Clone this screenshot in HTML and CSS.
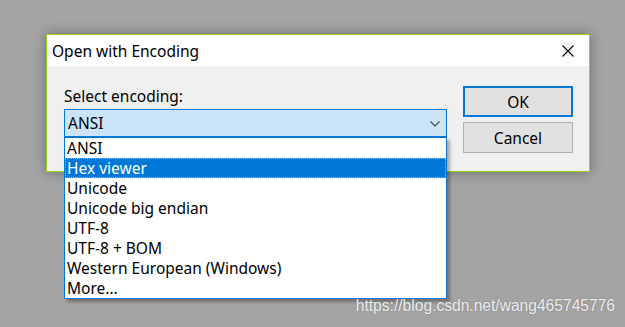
FILE: index.html
```html
<!DOCTYPE html>
<html lang="en">
<head>
    <meta charset="UTF-8">
    <title>Open with Encoding</title>
    <link rel="stylesheet" href="styles.css">
</head>
<body>
    <div class="dialog">
        <div class="titlebar">
            <span class="title">Open with Encoding</span>
            <svg class="close" width="12" height="12" viewBox="0 0 12 12">
                <path d="M0.5 0.5 L11.5 11.5 M11.5 0.5 L0.5 11.5" stroke="#000" stroke-width="1.1" fill="none"/>
            </svg>
        </div>
        <div class="content">
            <div class="field">
                <div class="label">Select encoding:</div>
                <div class="combo">
                    <span class="combo-value">ANSI</span>
                    <svg class="chevron" width="10" height="6" viewBox="0 0 10 6">
                        <path d="M0.5 0.5 L5 5 L9.5 0.5" stroke="#444" stroke-width="1.1" fill="none"/>
                    </svg>
                    <!-- popup list of the combobox -->
                    <ul class="dropdown">
                        <li>ANSI</li>
                        <li class="selected">Hex viewer</li>
                        <li>Unicode</li>
                        <li>Unicode big endian</li>
                        <li>UTF-8</li>
                        <li>UTF-8 + BOM</li>
                        <li>Western European (Windows)</li>
                        <li>More...</li>
                    </ul>
                </div>
            </div>
            <div class="buttons">
                <button class="btn btn-default">OK</button>
                <button class="btn">Cancel</button>
            </div>
        </div>
    </div>
    <div class="watermark">https://blog.csdn.net/wang465745776</div>
</body>
</html>
```
FILE: styles.css
```css
body {
    margin: 0;
    height: 327px;
    background-color: #a4a4a4;
    font-family: 'Noto Sans', 'Open Sans', sans-serif;
    font-size: 15.5px;
    color: #000;
    overflow: hidden;
    position: relative;
}
.dialog {
    margin: 34px 0 0 46px;
    width: 542px;
    border: 1px solid #9bd11c;
    box-shadow: 0 0 12px rgba(0, 0, 0, 0.35);
}
.titlebar {
    height: 31px;
    background-color: #fff;
    display: flex;
    align-items: center;
    justify-content: space-between;
    padding: 0 15px 0 5px;
}
.title {
    line-height: 20px;
}
.content {
    background-color: #f0f0f0;
    height: 105px;
    display: flex;
    gap: 16px;
    padding: 20px 16px 0 17px;
    box-sizing: border-box;
}
.field {
    flex: 1;
}
.label {
    line-height: 20px;
    margin-bottom: 3px;
}
.combo {
    position: relative;
    height: 28px;
    box-sizing: border-box;
    border: 1px solid #0078d7;
    background-color: #cce4f7;
    display: flex;
    align-items: center;
    justify-content: space-between;
    padding: 0 6px 0 3px;
}
.chevron {
    margin-top: 1px;
}
.dropdown {
    position: absolute;
    top: 27px;
    left: -1px;
    right: -1px;
    margin: 0;
    padding: 0;
    list-style: none;
    background-color: #fff;
    border: 1px solid #0078d7;
    box-shadow: 3px 3px 3px rgba(0, 0, 0, 0.3);
}
.dropdown li {
    height: 20px;
    line-height: 19px;
    padding: 0 1px;
    box-sizing: border-box;
    border: 1px solid transparent;
}
.dropdown li.selected {
    background-color: #0078d7;
    color: #fff;
    border: 1px dotted #f3a33a;
}
.buttons {
    width: 110px;
    display: flex;
    flex-direction: column;
    gap: 5px;
}
.btn {
    height: 31px;
    margin: 0;
    padding: 0;
    font-family: inherit;
    font-size: 15.5px;
    background-color: #e1e1e1;
    border: 1px solid #adadad;
    color: #000;
}
.btn-default {
    border: 2px solid #0078d7;
}
.watermark {
    position: absolute;
    right: 10px;
    bottom: 12px;
    font-family: 'Liberation Sans', Arial, sans-serif;
    font-size: 15.6px;
    color: #ececec;
    text-shadow: 0 0 2px rgba(0, 0, 0, 0.25);
}
```
